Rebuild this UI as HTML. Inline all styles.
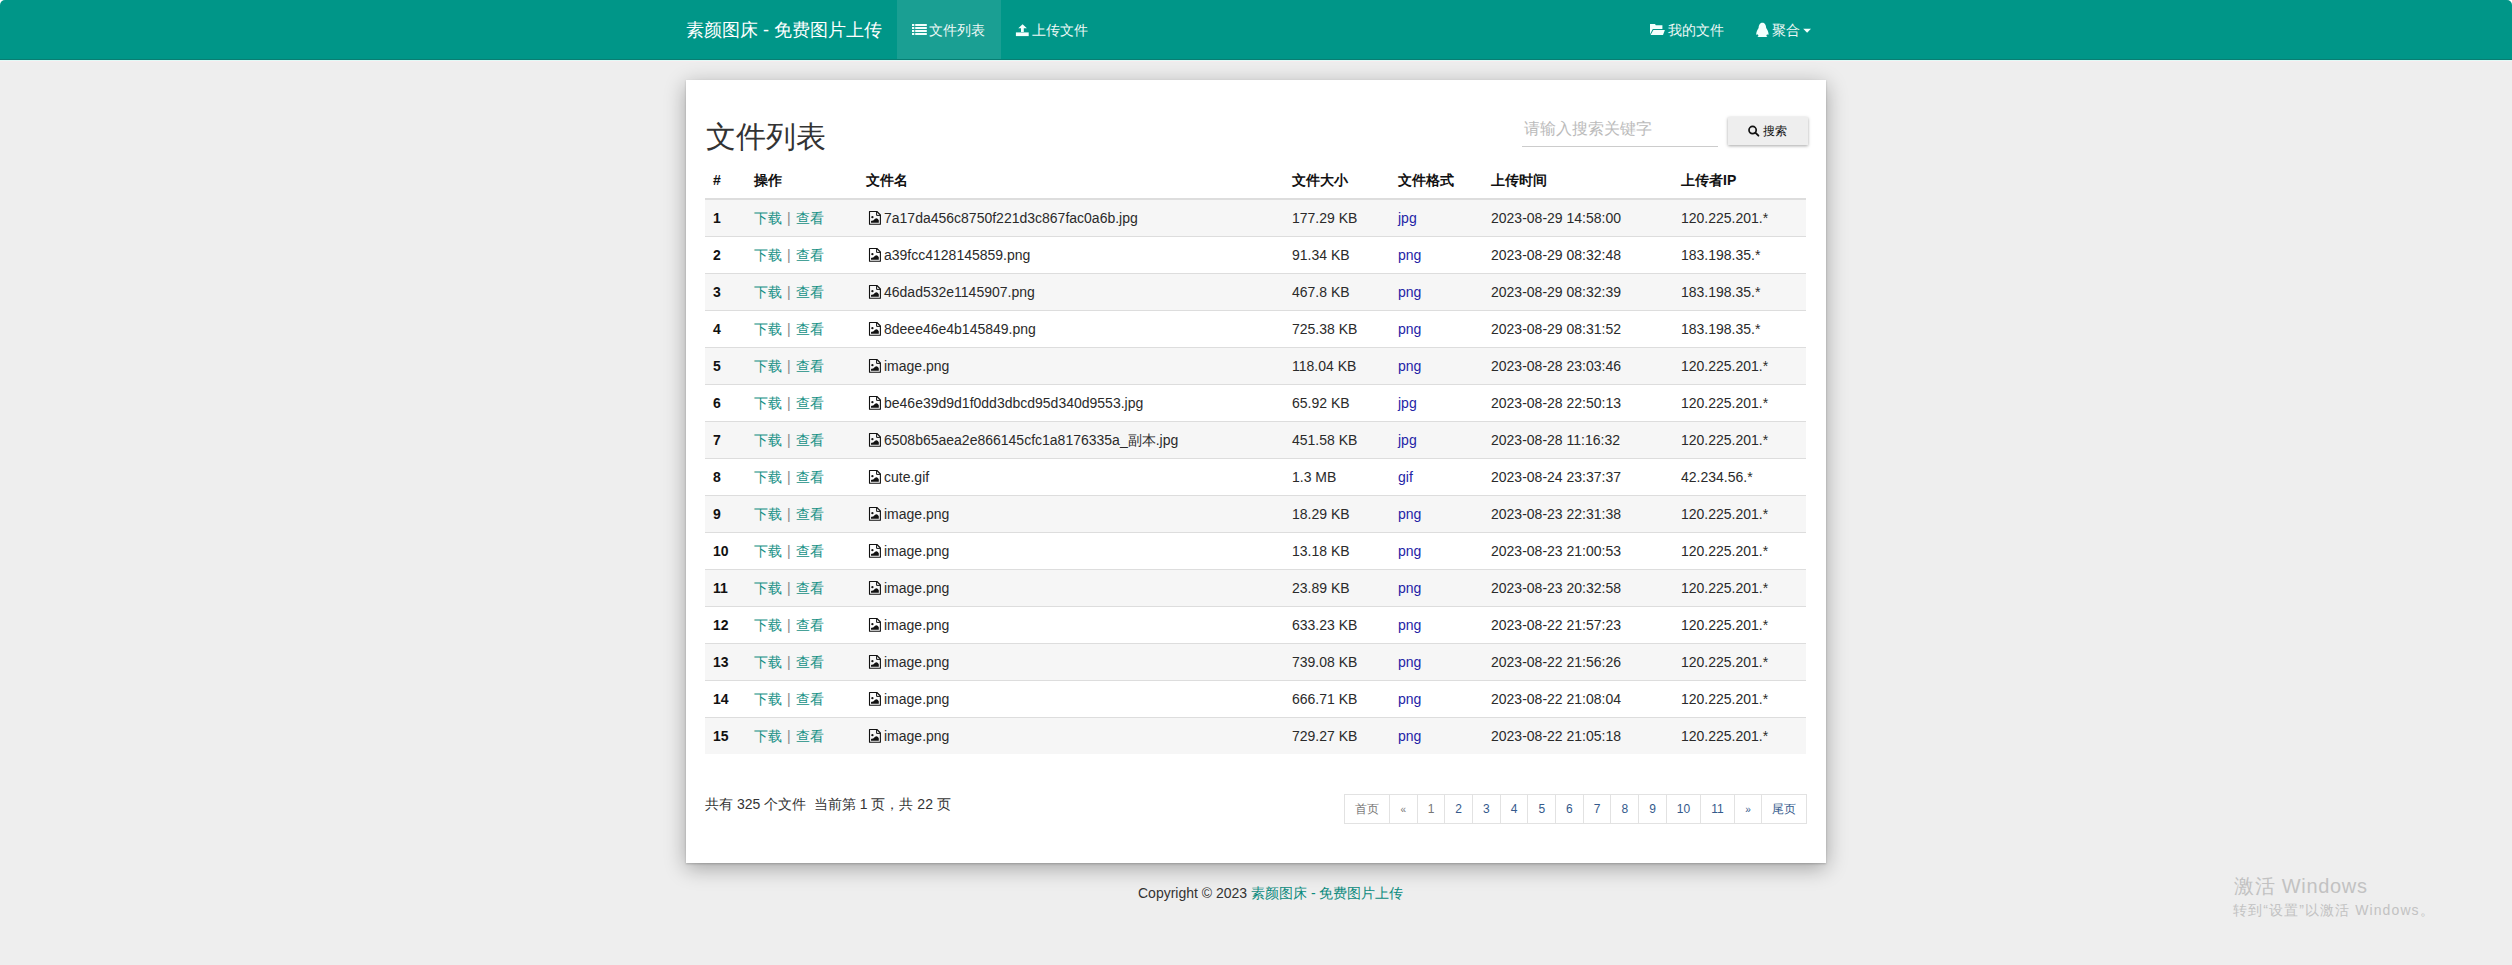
<!DOCTYPE html>
<html><head><meta charset="utf-8"><title>文件列表</title>
<style>
html,body{margin:0;padding:0}
body{width:2512px;height:965px;overflow:hidden;background:#eeeeee;font-family:"Liberation Sans",sans-serif;font-size:14px;line-height:20px;color:#333;position:relative}
.navbar{position:absolute;left:0;top:0;width:2512px;height:59px;background:#009688;color:#fff;border-radius:5px 5px 0 0;border-bottom:1px solid #0a7d72}
.ring1{position:absolute;left:0;top:60px;width:2512px;height:1px;background:#e2faf7}
.ring2{position:absolute;left:0;top:61px;width:2512px;height:1px;background:#f5ecee}
.corner{position:absolute;top:0;width:6px;height:6px;background:#fff}
.brand{position:absolute;left:686px;top:19px;font-size:18px;line-height:22px;white-space:nowrap}
.navitem{position:absolute;top:0;height:60px;line-height:60px;font-size:14px;white-space:nowrap;color:#eef8f6}
.active{background:#1a9f93}
.ico{display:inline-block;vertical-align:middle;position:relative;top:-2px;margin-right:4px}
.panel{position:absolute;left:686px;top:80px;width:1140px;height:783px;background:#fff;box-shadow:0 1px 2px rgba(0,0,0,.2),0 5px 20px rgba(0,0,0,.32)}
h2{position:absolute;left:20px;top:39px;margin:0;font-size:30px;line-height:36px;font-weight:normal;color:#333}
.search{position:absolute;left:836px;top:36px;width:196px;height:30px;border-bottom:1px solid #ccc}
.ph{position:absolute;left:2px;top:3px;font-size:16px;line-height:20px;color:#bbb;white-space:nowrap}
.btn{position:absolute;left:1042px;top:37px;width:80px;height:28px;background:#eee;box-shadow:0 1px 3px rgba(0,0,0,.35);font-size:12px;line-height:28px;color:#111;text-align:center}
table{position:absolute;left:19px;top:82px;width:1101px;border-collapse:collapse;table-layout:fixed}
th,td{padding:8px;line-height:20px;text-align:left;white-space:nowrap;overflow:hidden}
th{font-weight:bold;color:#111;border-bottom:2px solid #ddd}
td{border-top:1px solid #ddd;color:#2a2a2a;position:relative;top:0}
tbody tr:nth-child(odd) td{background:#f6f6f6}
td a{color:#159085}
.sep{color:#888;margin:0 5px 0 5px}
.c0{font-weight:bold;color:#111}
.fmt{color:#2323a6}
.fi{vertical-align:top;position:relative;top:2px;margin:0 2px 0 2px}
.info{position:absolute;left:19px;top:714px;white-space:nowrap;color:#333}
ul.pg{position:absolute;left:659px;top:714px;margin:0;padding:0;list-style:none;display:flex}
ul.pg li{padding:5px 10px;font-size:12px;line-height:18px;border:1px solid #e2e2e2;margin-left:-1px;color:#345a8c;background:#fff}
ul.pg li.dis{color:#777}
ul.pg li.arr{font-size:10px;width:6.67px;text-align:center;line-height:18px;padding-top:6px;padding-bottom:4px}
.copy{position:absolute;left:1138px;top:883px;white-space:nowrap;color:#333}
.copy a{color:#0b8a7d}
.win1{position:absolute;left:2234px;top:873px;font-size:20px;line-height:26px;color:#c2c2c2;white-space:nowrap;letter-spacing:0.7px}
.win2{position:absolute;left:2233px;top:901px;font-size:14px;line-height:18px;color:#c2c2c2;white-space:nowrap;letter-spacing:1.1px}
.navt{position:absolute;top:20px;line-height:20px;font-size:14px;white-space:nowrap;color:#eef8f6}

</style></head><body>
<div class="corner" style="left:0"></div><div class="corner" style="right:0"></div>
<div class="ring1"></div><div class="ring2"></div>
<div class="navbar">
 <div class="brand">素颜图床 - 免费图片上传</div>
 <div class="active" style="position:absolute;left:897px;top:0;width:104px;height:59px"></div>
 <div class="navt" style="left:929px">文件列表</div>
 <div class="navt" style="left:1032px">上传文件</div>
 <div class="navt" style="left:1668px">我的文件</div>
 <div class="navt" style="left:1772px">聚合</div>
 <svg style="position:absolute;left:0;top:0" width="2512" height="60" viewBox="0 0 2512 60">
  <g fill="#f4fffd">
   <rect x="912" y="24" width="2.3" height="2"/><rect x="915.2" y="24" width="11.6" height="2"/>
   <rect x="912" y="27" width="2.3" height="2"/><rect x="915.2" y="27" width="11.6" height="2"/>
   <rect x="912" y="30" width="2.3" height="2"/><rect x="915.2" y="30" width="11.6" height="2"/>
   <rect x="912" y="33" width="2.3" height="2"/><rect x="915.2" y="33" width="11.6" height="2"/>
   <path d="M1022.6 24.2L1026.9 28.2H1023.8V32H1021V28.2H1018.3Z"/>
   <path d="M1015.9 32.4H1028.7V36.1H1015.9Z"/>
   <path d="M1650 24H1655L1655.8 25.2H1662.4V29H1652.8L1650 34.2Z"/>
   <path d="M1653.4 30H1664.9L1663 35H1650.6Z"/>
   <path d="M1762.4 22.8C1759.6 22.8 1758.8 25.5 1758.6 28C1757.6 29.6 1756.2 31.8 1756.2 34.2C1756.5 35.2 1757.5 34.6 1757.8 34.2C1758 35 1758.3 35.5 1758.6 36C1757.8 36.4 1757.5 36.8 1757.6 37.1H1767.2C1767.3 36.8 1767 36.4 1766.2 36C1766.5 35.5 1766.8 35 1767 34.2C1767.3 34.6 1768.3 35.2 1768.6 34.2C1768.6 31.8 1767.2 29.6 1766.2 28C1766 25.5 1765.2 22.8 1762.4 22.8Z"/>
   <path d="M1803.2 28.7H1811L1807.1 32.8Z"/>
  </g>
 </svg>
</div>
<div class="panel">
 <h2>文件列表</h2>
 <div class="search"><span class="ph">请输入搜索关键字</span></div>
 <div class="btn"><span style="position:absolute;left:35px;top:0">搜索</span></div>
 <svg style="position:absolute;left:0;top:0" width="1140" height="100" viewBox="686 80 1140 100">
  <circle cx="1752.6" cy="130.05" r="3.6" fill="none" stroke="#111" stroke-width="1.7"/>
  <path d="M1755.6 132.9L1758.4 135.7" stroke="#111" stroke-width="1.9" stroke-linecap="round"/>
 </svg>
 <table>
  <colgroup><col style="width:41px"><col style="width:112px"><col style="width:426px"><col style="width:106px"><col style="width:93px"><col style="width:190px"><col style="width:133px"></colgroup>
  <thead><tr><th>#</th><th>操作</th><th>文件名</th><th>文件大小</th><th>文件格式</th><th>上传时间</th><th>上传者IP</th></tr></thead>
  <tbody>
<tr><td class="c0">1</td><td><a>下载</a><span class="sep">|</span><a>查看</a></td><td><svg class="fi" width="14" height="16" viewBox="6 5 14 16"><path d="M7.5 6.5H14.9L18.4 10V19.2H7.5Z" fill="none" stroke="#111" stroke-width="1.1" stroke-linejoin="round"/><path d="M14.6 6.5V10.4H18.4" fill="none" stroke="#111" stroke-width="1"/><circle cx="10.4" cy="12.2" r="1.15" fill="#111"/><path d="M9 17.7V16.2Q9.8 15.1 10.9 15.7L13.1 13.7Q14.5 12.9 15.9 13.9L16.8 15.2V17.7Z" fill="#111"/></svg>7a17da456c8750f221d3c867fac0a6b.jpg</td><td>177.29 KB</td><td><span class="fmt">jpg</span></td><td>2023-08-29 14:58:00</td><td>120.225.201.*</td></tr>
<tr><td class="c0">2</td><td><a>下载</a><span class="sep">|</span><a>查看</a></td><td><svg class="fi" width="14" height="16" viewBox="6 5 14 16"><path d="M7.5 6.5H14.9L18.4 10V19.2H7.5Z" fill="none" stroke="#111" stroke-width="1.1" stroke-linejoin="round"/><path d="M14.6 6.5V10.4H18.4" fill="none" stroke="#111" stroke-width="1"/><circle cx="10.4" cy="12.2" r="1.15" fill="#111"/><path d="M9 17.7V16.2Q9.8 15.1 10.9 15.7L13.1 13.7Q14.5 12.9 15.9 13.9L16.8 15.2V17.7Z" fill="#111"/></svg>a39fcc4128145859.png</td><td>91.34 KB</td><td><span class="fmt">png</span></td><td>2023-08-29 08:32:48</td><td>183.198.35.*</td></tr>
<tr><td class="c0">3</td><td><a>下载</a><span class="sep">|</span><a>查看</a></td><td><svg class="fi" width="14" height="16" viewBox="6 5 14 16"><path d="M7.5 6.5H14.9L18.4 10V19.2H7.5Z" fill="none" stroke="#111" stroke-width="1.1" stroke-linejoin="round"/><path d="M14.6 6.5V10.4H18.4" fill="none" stroke="#111" stroke-width="1"/><circle cx="10.4" cy="12.2" r="1.15" fill="#111"/><path d="M9 17.7V16.2Q9.8 15.1 10.9 15.7L13.1 13.7Q14.5 12.9 15.9 13.9L16.8 15.2V17.7Z" fill="#111"/></svg>46dad532e1145907.png</td><td>467.8 KB</td><td><span class="fmt">png</span></td><td>2023-08-29 08:32:39</td><td>183.198.35.*</td></tr>
<tr><td class="c0">4</td><td><a>下载</a><span class="sep">|</span><a>查看</a></td><td><svg class="fi" width="14" height="16" viewBox="6 5 14 16"><path d="M7.5 6.5H14.9L18.4 10V19.2H7.5Z" fill="none" stroke="#111" stroke-width="1.1" stroke-linejoin="round"/><path d="M14.6 6.5V10.4H18.4" fill="none" stroke="#111" stroke-width="1"/><circle cx="10.4" cy="12.2" r="1.15" fill="#111"/><path d="M9 17.7V16.2Q9.8 15.1 10.9 15.7L13.1 13.7Q14.5 12.9 15.9 13.9L16.8 15.2V17.7Z" fill="#111"/></svg>8deee46e4b145849.png</td><td>725.38 KB</td><td><span class="fmt">png</span></td><td>2023-08-29 08:31:52</td><td>183.198.35.*</td></tr>
<tr><td class="c0">5</td><td><a>下载</a><span class="sep">|</span><a>查看</a></td><td><svg class="fi" width="14" height="16" viewBox="6 5 14 16"><path d="M7.5 6.5H14.9L18.4 10V19.2H7.5Z" fill="none" stroke="#111" stroke-width="1.1" stroke-linejoin="round"/><path d="M14.6 6.5V10.4H18.4" fill="none" stroke="#111" stroke-width="1"/><circle cx="10.4" cy="12.2" r="1.15" fill="#111"/><path d="M9 17.7V16.2Q9.8 15.1 10.9 15.7L13.1 13.7Q14.5 12.9 15.9 13.9L16.8 15.2V17.7Z" fill="#111"/></svg>image.png</td><td>118.04 KB</td><td><span class="fmt">png</span></td><td>2023-08-28 23:03:46</td><td>120.225.201.*</td></tr>
<tr><td class="c0">6</td><td><a>下载</a><span class="sep">|</span><a>查看</a></td><td><svg class="fi" width="14" height="16" viewBox="6 5 14 16"><path d="M7.5 6.5H14.9L18.4 10V19.2H7.5Z" fill="none" stroke="#111" stroke-width="1.1" stroke-linejoin="round"/><path d="M14.6 6.5V10.4H18.4" fill="none" stroke="#111" stroke-width="1"/><circle cx="10.4" cy="12.2" r="1.15" fill="#111"/><path d="M9 17.7V16.2Q9.8 15.1 10.9 15.7L13.1 13.7Q14.5 12.9 15.9 13.9L16.8 15.2V17.7Z" fill="#111"/></svg>be46e39d9d1f0dd3dbcd95d340d9553.jpg</td><td>65.92 KB</td><td><span class="fmt">jpg</span></td><td>2023-08-28 22:50:13</td><td>120.225.201.*</td></tr>
<tr><td class="c0">7</td><td><a>下载</a><span class="sep">|</span><a>查看</a></td><td><svg class="fi" width="14" height="16" viewBox="6 5 14 16"><path d="M7.5 6.5H14.9L18.4 10V19.2H7.5Z" fill="none" stroke="#111" stroke-width="1.1" stroke-linejoin="round"/><path d="M14.6 6.5V10.4H18.4" fill="none" stroke="#111" stroke-width="1"/><circle cx="10.4" cy="12.2" r="1.15" fill="#111"/><path d="M9 17.7V16.2Q9.8 15.1 10.9 15.7L13.1 13.7Q14.5 12.9 15.9 13.9L16.8 15.2V17.7Z" fill="#111"/></svg>6508b65aea2e866145cfc1a8176335a_副本.jpg</td><td>451.58 KB</td><td><span class="fmt">jpg</span></td><td>2023-08-28 11:16:32</td><td>120.225.201.*</td></tr>
<tr><td class="c0">8</td><td><a>下载</a><span class="sep">|</span><a>查看</a></td><td><svg class="fi" width="14" height="16" viewBox="6 5 14 16"><path d="M7.5 6.5H14.9L18.4 10V19.2H7.5Z" fill="none" stroke="#111" stroke-width="1.1" stroke-linejoin="round"/><path d="M14.6 6.5V10.4H18.4" fill="none" stroke="#111" stroke-width="1"/><circle cx="10.4" cy="12.2" r="1.15" fill="#111"/><path d="M9 17.7V16.2Q9.8 15.1 10.9 15.7L13.1 13.7Q14.5 12.9 15.9 13.9L16.8 15.2V17.7Z" fill="#111"/></svg>cute.gif</td><td>1.3 MB</td><td><span class="fmt">gif</span></td><td>2023-08-24 23:37:37</td><td>42.234.56.*</td></tr>
<tr><td class="c0">9</td><td><a>下载</a><span class="sep">|</span><a>查看</a></td><td><svg class="fi" width="14" height="16" viewBox="6 5 14 16"><path d="M7.5 6.5H14.9L18.4 10V19.2H7.5Z" fill="none" stroke="#111" stroke-width="1.1" stroke-linejoin="round"/><path d="M14.6 6.5V10.4H18.4" fill="none" stroke="#111" stroke-width="1"/><circle cx="10.4" cy="12.2" r="1.15" fill="#111"/><path d="M9 17.7V16.2Q9.8 15.1 10.9 15.7L13.1 13.7Q14.5 12.9 15.9 13.9L16.8 15.2V17.7Z" fill="#111"/></svg>image.png</td><td>18.29 KB</td><td><span class="fmt">png</span></td><td>2023-08-23 22:31:38</td><td>120.225.201.*</td></tr>
<tr><td class="c0">10</td><td><a>下载</a><span class="sep">|</span><a>查看</a></td><td><svg class="fi" width="14" height="16" viewBox="6 5 14 16"><path d="M7.5 6.5H14.9L18.4 10V19.2H7.5Z" fill="none" stroke="#111" stroke-width="1.1" stroke-linejoin="round"/><path d="M14.6 6.5V10.4H18.4" fill="none" stroke="#111" stroke-width="1"/><circle cx="10.4" cy="12.2" r="1.15" fill="#111"/><path d="M9 17.7V16.2Q9.8 15.1 10.9 15.7L13.1 13.7Q14.5 12.9 15.9 13.9L16.8 15.2V17.7Z" fill="#111"/></svg>image.png</td><td>13.18 KB</td><td><span class="fmt">png</span></td><td>2023-08-23 21:00:53</td><td>120.225.201.*</td></tr>
<tr><td class="c0">11</td><td><a>下载</a><span class="sep">|</span><a>查看</a></td><td><svg class="fi" width="14" height="16" viewBox="6 5 14 16"><path d="M7.5 6.5H14.9L18.4 10V19.2H7.5Z" fill="none" stroke="#111" stroke-width="1.1" stroke-linejoin="round"/><path d="M14.6 6.5V10.4H18.4" fill="none" stroke="#111" stroke-width="1"/><circle cx="10.4" cy="12.2" r="1.15" fill="#111"/><path d="M9 17.7V16.2Q9.8 15.1 10.9 15.7L13.1 13.7Q14.5 12.9 15.9 13.9L16.8 15.2V17.7Z" fill="#111"/></svg>image.png</td><td>23.89 KB</td><td><span class="fmt">png</span></td><td>2023-08-23 20:32:58</td><td>120.225.201.*</td></tr>
<tr><td class="c0">12</td><td><a>下载</a><span class="sep">|</span><a>查看</a></td><td><svg class="fi" width="14" height="16" viewBox="6 5 14 16"><path d="M7.5 6.5H14.9L18.4 10V19.2H7.5Z" fill="none" stroke="#111" stroke-width="1.1" stroke-linejoin="round"/><path d="M14.6 6.5V10.4H18.4" fill="none" stroke="#111" stroke-width="1"/><circle cx="10.4" cy="12.2" r="1.15" fill="#111"/><path d="M9 17.7V16.2Q9.8 15.1 10.9 15.7L13.1 13.7Q14.5 12.9 15.9 13.9L16.8 15.2V17.7Z" fill="#111"/></svg>image.png</td><td>633.23 KB</td><td><span class="fmt">png</span></td><td>2023-08-22 21:57:23</td><td>120.225.201.*</td></tr>
<tr><td class="c0">13</td><td><a>下载</a><span class="sep">|</span><a>查看</a></td><td><svg class="fi" width="14" height="16" viewBox="6 5 14 16"><path d="M7.5 6.5H14.9L18.4 10V19.2H7.5Z" fill="none" stroke="#111" stroke-width="1.1" stroke-linejoin="round"/><path d="M14.6 6.5V10.4H18.4" fill="none" stroke="#111" stroke-width="1"/><circle cx="10.4" cy="12.2" r="1.15" fill="#111"/><path d="M9 17.7V16.2Q9.8 15.1 10.9 15.7L13.1 13.7Q14.5 12.9 15.9 13.9L16.8 15.2V17.7Z" fill="#111"/></svg>image.png</td><td>739.08 KB</td><td><span class="fmt">png</span></td><td>2023-08-22 21:56:26</td><td>120.225.201.*</td></tr>
<tr><td class="c0">14</td><td><a>下载</a><span class="sep">|</span><a>查看</a></td><td><svg class="fi" width="14" height="16" viewBox="6 5 14 16"><path d="M7.5 6.5H14.9L18.4 10V19.2H7.5Z" fill="none" stroke="#111" stroke-width="1.1" stroke-linejoin="round"/><path d="M14.6 6.5V10.4H18.4" fill="none" stroke="#111" stroke-width="1"/><circle cx="10.4" cy="12.2" r="1.15" fill="#111"/><path d="M9 17.7V16.2Q9.8 15.1 10.9 15.7L13.1 13.7Q14.5 12.9 15.9 13.9L16.8 15.2V17.7Z" fill="#111"/></svg>image.png</td><td>666.71 KB</td><td><span class="fmt">png</span></td><td>2023-08-22 21:08:04</td><td>120.225.201.*</td></tr>
<tr><td class="c0">15</td><td><a>下载</a><span class="sep">|</span><a>查看</a></td><td><svg class="fi" width="14" height="16" viewBox="6 5 14 16"><path d="M7.5 6.5H14.9L18.4 10V19.2H7.5Z" fill="none" stroke="#111" stroke-width="1.1" stroke-linejoin="round"/><path d="M14.6 6.5V10.4H18.4" fill="none" stroke="#111" stroke-width="1"/><circle cx="10.4" cy="12.2" r="1.15" fill="#111"/><path d="M9 17.7V16.2Q9.8 15.1 10.9 15.7L13.1 13.7Q14.5 12.9 15.9 13.9L16.8 15.2V17.7Z" fill="#111"/></svg>image.png</td><td>729.27 KB</td><td><span class="fmt">png</span></td><td>2023-08-22 21:05:18</td><td>120.225.201.*</td></tr>
  </tbody>
 </table>
 <div class="info">共有 325 个文件&nbsp; 当前第 1 页，共 22 页</div>
 <ul class="pg"><li class="dis">首页</li><li class="dis arr">«</li><li class="dis">1</li><li class="">2</li><li class="">3</li><li class="">4</li><li class="">5</li><li class="">6</li><li class="">7</li><li class="">8</li><li class="">9</li><li class="">10</li><li class="">11</li><li class="arr">»</li><li class="">尾页</li></ul>
</div>
<div class="copy">Copyright © 2023 <a>素颜图床 - 免费图片上传</a></div>
<div class="win1">激活 Windows</div>
<div class="win2">转到“设置”以激活 Windows。</div>

</body></html>
